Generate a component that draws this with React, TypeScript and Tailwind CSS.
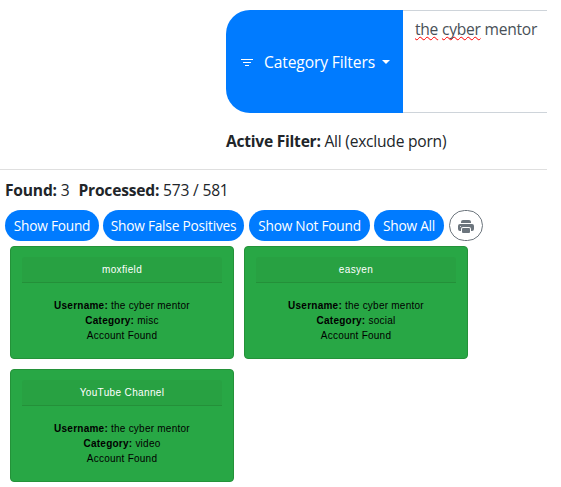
import { BsPrinterFill } from "react-icons/bs";

type Account = { site: string; category: string };

const accounts: Account[] = [
  { site: "moxfield", category: "misc" },
  { site: "easyen", category: "social" },
  { site: "YouTube Channel", category: "video" },
];

const buttons = [
  { label: "Show Found", size: "w-[94px] mr-1" },
  { label: "Show False Positives", size: "w-[141px] mr-[5px]" },
  { label: "Show Not Found", size: "w-[121px] mr-1" },
  { label: "Show All", size: "w-[70px] mr-[5px]" },
];

function Misspelled({ children }: { children: string }) {
  return (
    <span className="underline decoration-[#f00] decoration-wavy decoration-[1.2px] underline-offset-[1px] [text-decoration-skip-ink:none]">
      {children}
    </span>
  );
}

function AccountCard({ site, category }: Account) {
  return (
    <article className="h-[113px] w-[224px] rounded border border-[#249239] bg-[#28a745] px-[11px] pt-[10px] text-center font-['Liberation_Sans',Arial,sans-serif] text-[10px] leading-[15px] text-black">
      <h2 className="h-[26px] rounded-t-[3px] border-b border-[#249039] bg-[#28a142] pt-[5px] tracking-[0.36px] text-white">
        {site}
      </h2>
      <div className="pt-[15px] tracking-[0.24px]">
        <p><b>Username:</b> the cyber mentor</p>
        <p><b>Category:</b> {category}</p>
        <p>Account Found</p>
      </div>
    </article>
  );
}

export default function App() {
  return (
    <main className="h-[487px] w-[561px] overflow-hidden bg-white font-['Open_Sans','Noto_Sans',sans-serif] text-[15.6px] leading-6 tracking-[-0.2px] text-[#212529]">
      <section className="h-[170px] w-[547px] border-b border-[#dfdfdf] pl-[226px] pt-[10px]">
        <div className="flex h-[103px]">
          <button className="flex w-[177px] shrink-0 items-center whitespace-nowrap rounded-l-[24px] bg-[#007bff] pl-[15px] pt-px text-white">
            <svg className="mr-[11px] mt-[2px] h-3 w-3" viewBox="0 0 12 12" fill="none" stroke="currentColor">
              <path d="M0 2.5h12M2 5.5h8M4 8.5h4" />
            </svg>
            <span className="w-[111px] text-left tracking-[-0.12px]">Category Filters</span>
            <svg className="ml-[7px] h-1 w-2" viewBox="0 0 8 4" fill="currentColor">
              <path d="M0 0h8L4 4z" />
            </svg>
          </button>
          <div className="flex-1 whitespace-nowrap border-y border-[#ced4da] pl-3 pt-[6px] tracking-[-0.25px] text-[#495057]">
            <Misspelled>the</Misspelled> <Misspelled>cyber</Misspelled> mentor
          </div>
        </div>
        <p className="mt-[16px] whitespace-nowrap tracking-[-0.24px]"><b>Active Filter:</b> All (exclude porn)</p>
      </section>

      <p className="mt-[8px] flex h-[32px] gap-[9px] whitespace-nowrap pl-[5px]">
        <span><b>Found:</b> 3</span>
        <span><b>Processed:</b> 573 / 581</span>
      </p>

      <nav className="flex h-[31px] pl-[5px] text-[13.7px] tracking-[-0.22px]">
        {buttons.map(({ label, size }) => (
          <button
            key={label}
            className={`${size} flex h-[31px] shrink-0 items-center justify-center whitespace-nowrap rounded-full bg-[#007bff] pt-px text-white`}
          >
            {label}
          </button>
        ))}
        <button aria-label="Print" className="flex h-[31px] w-[34px] items-center justify-center rounded-full border border-[#6c757d] pt-[2px] text-[#6c757d]">
          <BsPrinterFill className="h-4 w-4" />
        </button>
      </nav>

      <div className="ml-[10px] mt-[5px] grid grid-cols-[224px_224px] gap-[10px]">
        {accounts.map((account) => (
          <AccountCard key={account.site} {...account} />
        ))}
      </div>
    </main>
  );
}
